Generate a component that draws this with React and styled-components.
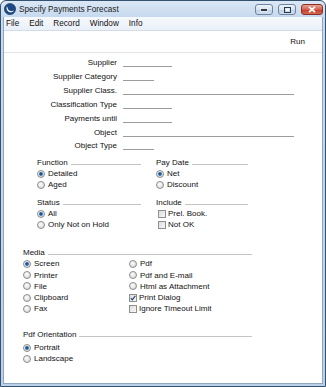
import React from 'react';
import styled, { createGlobalStyle, css } from 'styled-components';

const Global = createGlobalStyle`
  html, body { margin: 0; padding: 0; background: #ffffff; }
  body { font-family: "Liberation Sans", Arial, sans-serif; }
`;

const Window = styled.div`
  width: 326px;
  height: 387px;
  box-sizing: border-box;
  border: 1px solid #33526f;
  border-radius: 6px 6px 0 0;
  background: linear-gradient(#dbe7f5, #c6d9ee 16px, #bcd1e9);
  display: flex;
  flex-direction: column;
  padding: 0 2px 2px;
  overflow: hidden;
`;

const TitleBar = styled.div`
  height: 16px;
  flex: none;
  display: flex;
  align-items: center;
  padding-left: 1px;
  font-size: 8.2px;
  color: #1b1b1b;
`;

const AppIcon = styled.svg`
  width: 12px;
  height: 12px;
  flex: none;
  margin-right: 3px;
`;

const TitleText = styled.span`
  flex: 1;
  white-space: nowrap;
`;

const Caption = styled.div`
  display: flex;
  gap: 5px;
  align-self: flex-start;
  margin-top: 3px;
  margin-right: 0;
`;

const CapButton = styled.div`
  width: ${p => p.$w}px;
  height: 11px;
  box-sizing: border-box;
  border: 1px solid ${p => (p.$close ? '#8a2f25' : '#70849e')};
  border-radius: 3px;
  display: flex;
  align-items: center;
  justify-content: center;
  background: ${p =>
    p.$close
      ? 'linear-gradient(#e7a192, #d2604c 50%, #c1392a 51%, #d46a4e)'
      : 'linear-gradient(#edf3fa, #d6e3f1 50%, #bccfe5 51%, #cfdff0)'};
`;

const Cell = styled.div`
  display: flex;
  flex-direction: column;
  flex: 1;
  min-height: 0;
  background: #ffffff;
  border: 1px solid #8fa6c1;
  border-top: none;
`;

const MenuBar = styled.div`
  height: 13px;
  flex: none;
  display: flex;
  align-items: center;
  background: linear-gradient(#f6f9fd, #eaf0f8);
  border-bottom: 1px solid #d3dce8;
  padding-left: 2px;
  font-size: 8.2px;
  color: #111;
`;

const MenuItem = styled.span`
  margin-right: ${p => p.$gap}px;
`;

const Toolbar = styled.div`
  height: 21px;
  flex: none;
  display: flex;
  align-items: center;
  justify-content: flex-end;
  padding-right: 17px;
  border-bottom: 1px solid #e4e4e4;
  font-size: 8px;
  color: #111;
`;

const Content = styled.div`
  flex: 1;
  display: flex;
  flex-direction: column;
  font-size: 8px;
  color: #111;
`;

const Form = styled.div`
  display: grid;
  grid-template-columns: 113px auto;
  column-gap: 6px;
  grid-auto-rows: 13.85px;
  align-items: center;
  padding-top: 3px;
`;

const Label = styled.span`
  text-align: right;
  white-space: nowrap;
`;

const Field = styled.span`
  width: ${p => p.$w}px;
  height: 9px;
  box-sizing: border-box;
  border-bottom: 1px solid #9c9c9c;
`;

const GroupGrid = styled.div`
  display: grid;
  grid-template-columns: 104px 92px;
  column-gap: 15px;
  row-gap: 6.7px;
  padding-left: 33px;
  margin-top: 4.5px;
`;

const Group = styled.div`
  display: flex;
  flex-direction: column;
`;

const Section = styled.div`
  display: flex;
  flex-direction: column;
  width: 229px;
  padding-left: 19px;
  margin-top: ${p => p.$mt}px;
`;

const GroupTitle = styled.div`
  height: 11px;
  display: flex;
  align-items: center;
  white-space: nowrap;
  margin-bottom: ${p => p.$mb || 0}px;
  &::after {
    content: '';
    flex: 1;
    height: 0;
    border-top: 1px solid #c4c4c4;
    margin-left: 3px;
    margin-top: 3px;
  }
`;

const Option = styled.div`
  height: ${p => p.$h || 11}px;
  display: flex;
  align-items: center;
  white-space: nowrap;
`;

const RadioDot = styled.span`
  width: 8px;
  height: 8px;
  box-sizing: border-box;
  border-radius: 50%;
  border: 1px solid #8c8c8c;
  background: radial-gradient(circle at 40% 35%, #fdfdfd, #d2d2d2);
  margin-right: 3px;
  position: relative;
  flex: none;
  ${p =>
    p.$on &&
    css`
      &::after {
        content: '';
        position: absolute;
        left: 1px;
        top: 1px;
        width: 4px;
        height: 4px;
        border-radius: 50%;
        background: radial-gradient(circle at 45% 40%, #153f72, #2f78bb 60%, #7fbcef);
      }
    `}
`;

const CheckBox = styled.span`
  width: 8px;
  height: 8px;
  box-sizing: border-box;
  border: 1px solid #8e8f8f;
  background: linear-gradient(135deg, #dcdcdc, #f8f8f8);
  margin: 0 2px 0 ${p => p.$indent}px;
  flex: none;
  display: flex;
  align-items: center;
  justify-content: center;
`;

const MediaGrid = styled.div`
  display: grid;
  grid-template-columns: 106px auto;
  grid-auto-rows: 11.2px;
  grid-auto-flow: column;
  grid-template-rows: repeat(5, 11.2px);
`;

function Radio({ on, children, h }) {
  return (
    <Option $h={h}>
      <RadioDot $on={on} />
      {children}
    </Option>
  );
}

function Check({ on, children, indent = 2, h }) {
  return (
    <Option $h={h}>
      <CheckBox $indent={indent}>
        {on && (
          <svg width="6" height="6" viewBox="0 0 6 6">
            <path d="M0.8 3.2 L2.3 4.8 L5.3 0.8" fill="none" stroke="#1f3d6b" strokeWidth="1.1" />
          </svg>
        )}
      </CheckBox>
      {children}
    </Option>
  );
}

const fields = [
  ['Supplier', 49],
  ['Supplier Category', 31],
  ['Supplier Class.', 171],
  ['Classification Type', 49],
  ['Payments until', 49],
  ['Object', 171],
  ['Object Type', 31],
];

export default function App() {
  return (
    <>
      <Global />
      <Window>
        <TitleBar>
          <AppIcon viewBox="0 0 12 12">
            <circle cx="6" cy="6" r="5.6" fill="#1d4a86" />
            <circle cx="6" cy="6" r="5.6" fill="none" stroke="#0f2c55" strokeWidth="0.6" />
            <path d="M3 3.2 C1.6 6 3.6 9.6 7.4 9.2 C9 9 9.6 8 9.8 7.2 C8.6 8.4 6 8.6 4.6 7 C3.6 5.8 3.6 4.4 3 3.2 Z" fill="#ffffff" />
          </AppIcon>
          <TitleText>Specify Payments Forecast</TitleText>
          <Caption>
            <CapButton $w={18}>
              <svg width="8" height="4" viewBox="0 0 8 4">
                <rect x="0.5" y="0.5" width="7" height="3" fill="#2b3a4d" stroke="#ffffff" strokeWidth="0.8" />
              </svg>
            </CapButton>
            <CapButton $w={18}>
              <svg width="7" height="6" viewBox="0 0 7 6">
                <rect x="0.5" y="0.5" width="6" height="5" fill="none" stroke="#2b3a4d" strokeWidth="1" />
                <rect x="2" y="2" width="3" height="2" fill="#ffffff" />
              </svg>
            </CapButton>
            <CapButton $w={22} $close>
              <svg width="8" height="7" viewBox="0 0 8 7">
                <path d="M1 0.8 L7 6.2 M7 0.8 L1 6.2" stroke="#ffffff" strokeWidth="1.8" />
              </svg>
            </CapButton>
          </Caption>
        </TitleBar>
        <Cell>
          <MenuBar>
            <MenuItem $gap={10}>File</MenuItem>
            <MenuItem $gap={10}>Edit</MenuItem>
            <MenuItem $gap={10}>Record</MenuItem>
            <MenuItem $gap={10}>Window</MenuItem>
            <MenuItem $gap={0}>Info</MenuItem>
          </MenuBar>
          <Toolbar>Run</Toolbar>
          <Content>
            <Form>
              {fields.map(([label, w]) => (
                <React.Fragment key={label}>
                  <Label>{label}</Label>
                  <Field $w={w} />
                </React.Fragment>
              ))}
            </Form>
            <GroupGrid>
              <Group>
                <GroupTitle>Function</GroupTitle>
                <Radio on>Detailed</Radio>
                <Radio>Aged</Radio>
              </Group>
              <Group>
                <GroupTitle>Pay Date</GroupTitle>
                <Radio on>Net</Radio>
                <Radio>Discount</Radio>
              </Group>
              <Group>
                <GroupTitle>Status</GroupTitle>
                <Radio on>All</Radio>
                <Radio>Only Not on Hold</Radio>
              </Group>
              <Group>
                <GroupTitle>Include</GroupTitle>
                <Check>Prel. Book.</Check>
                <Check>Not OK</Check>
              </Group>
            </GroupGrid>
            <Section $mt={17.3}>
              <GroupTitle>Media</GroupTitle>
              <MediaGrid>
                <Radio on h={11.2}>Screen</Radio>
                <Radio h={11.2}>Printer</Radio>
                <Radio h={11.2}>File</Radio>
                <Radio h={11.2}>Clipboard</Radio>
                <Radio h={11.2}>Fax</Radio>
                <Radio h={11.2}>Pdf</Radio>
                <Radio h={11.2}>Pdf and E-mail</Radio>
                <Radio h={11.2}>Html as Attachment</Radio>
                <Check on indent={0} h={11.2}>Print Dialog</Check>
                <Check indent={0} h={11.2}>Ignore Timeout Limit</Check>
              </MediaGrid>
            </Section>
            <Section $mt={15}>
              <GroupTitle $mb={1.6}>Pdf Orientation</GroupTitle>
              <Radio on h={11.3}>Portrait</Radio>
              <Radio h={11.3}>Landscape</Radio>
            </Section>
          </Content>
        </Cell>
      </Window>
    </>
  );
}
